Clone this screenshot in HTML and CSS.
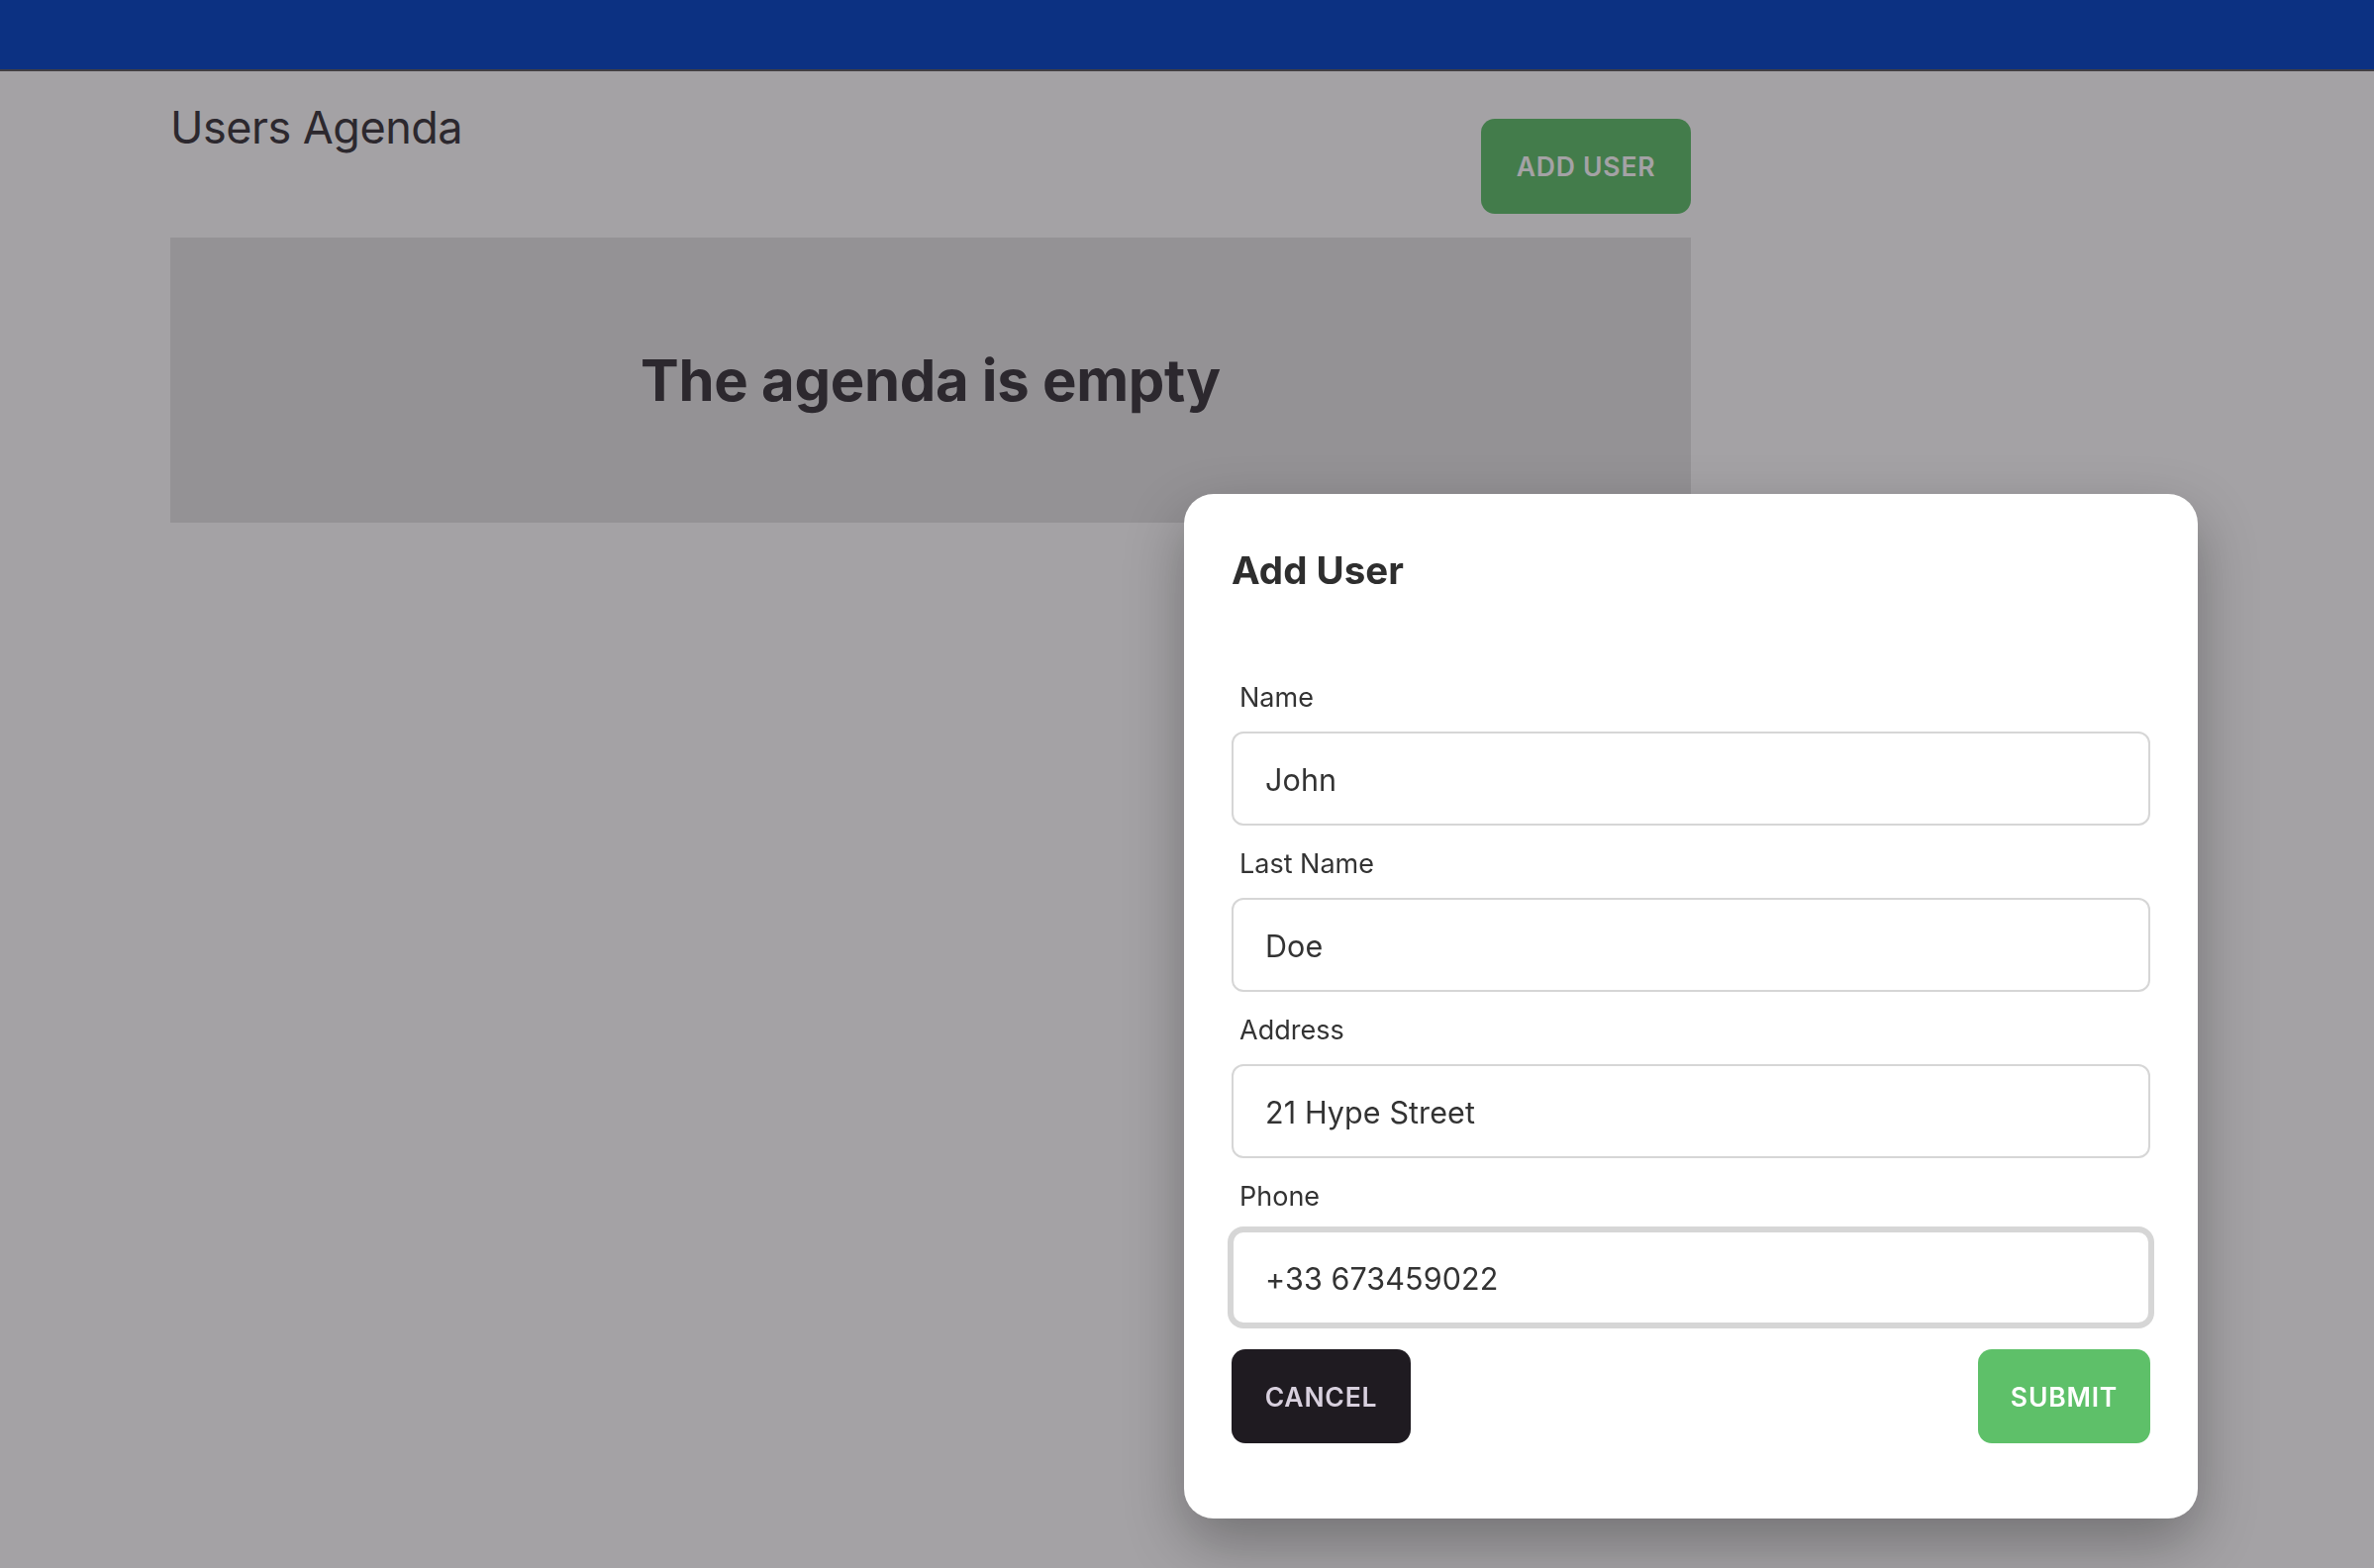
FILE: index.html
```html
<!DOCTYPE html>
<html lang="en">
<head>
<meta charset="utf-8">
<title>Users Agenda</title>
<link rel="stylesheet" href="styles.css">
</head>
<body>
<header class="topbar"></header>
<main class="page">
  <div class="page-head">
    <h1 class="page-title">Users Agenda</h1>
    <button class="btn btn-green btn-add">ADD USER</button>
  </div>
  <section class="empty-box">
    <h2 class="empty-text">The agenda is empty</h2>
  </section>
</main>
<div class="overlay">
  <div class="modal">
    <h2 class="modal-title">Add User</h2>
    <form class="form">
      <div class="field">
        <label class="label">Name</label>
        <input class="input" type="text" value="John">
      </div>
      <div class="field">
        <label class="label">Last Name</label>
        <input class="input" type="text" value="Doe">
      </div>
      <div class="field">
        <label class="label">Address</label>
        <input class="input" type="text" value="21 Hype Street">
      </div>
      <div class="field">
        <label class="label">Phone</label>
        <input class="input input-focus" type="text" value="+33 673459022">
      </div>
      <div class="actions">
        <button type="button" class="btn btn-dark">CANCEL</button>
        <button type="button" class="btn btn-green">SUBMIT</button>
      </div>
    </form>
  </div>
</div>
</body>
</html>
```

FILE: styles.css
```css
* { box-sizing: border-box; }
html, body { margin: 0; padding: 0; }
body {
  font-family: Inter, "Noto Sans", "Liberation Sans", sans-serif;
  background: #ffffff;
  color: #38353a;
  min-height: 1584px;
}
.topbar {
  height: 72px;
  background: #0243c5;
  border-bottom: 2px solid #5a5a5c;
}
.page {
  width: 1708px;
  padding: 29px 0 0 172px;
}
.page-head {
  display: flex;
  justify-content: space-between;
  align-items: flex-start;
}
.page-title {
  margin: 0;
  font-size: 45px;
  line-height: 56px;
  font-weight: 400;
  letter-spacing: -0.5px;
  color: #38353a;
}
.btn {
  font-family: Inter, "Noto Sans", "Liberation Sans", sans-serif;
  border: none;
  border-radius: 14px;
  height: 95px;
  font-size: 26.5px;
  font-weight: 600;
  letter-spacing: 0.8px;
  cursor: pointer;
  padding: 0;
}
.btn-green { background: #5ec069; color: #ffffff; }
.btn-dark { background: #1f1b21; color: #d8d0de; }
.btn-add {
  margin-top: 19px;
  height: 96px;
  width: 212px;
}
.empty-box {
  margin-top: 24px;
  height: 288px;
  background: #e4e4e4;
  display: flex;
  align-items: center;
  justify-content: center;
}
.empty-text {
  margin: 0;
  font-size: 58px;
  font-weight: 700;
  letter-spacing: -0.3px;
  color: #38353a;
}
.overlay {
  position: fixed;
  inset: 0;
  background: rgba(27, 22, 30, 0.4);
}
.modal {
  position: absolute;
  left: 1196px;
  top: 499px;
  width: 1024px;
  background: #ffffff;
  border-radius: 30px;
  padding: 54px 48px 76px 48px;
  box-shadow: 0 24px 60px rgba(0, 0, 0, 0.3);
}
.modal-title {
  margin: 0;
  font-size: 38.5px;
  line-height: 46px;
  font-weight: 700;
  color: #2e2e2e;
}
.form {
  margin-top: 86px;
  display: flex;
  flex-direction: column;
}
.field {
  display: flex;
  flex-direction: column;
  margin-bottom: 19px;
}
.field:nth-last-child(2) { margin-bottom: 25px; }
.label {
  margin-left: 8px;
  font-size: 27px;
  line-height: 40px;
  color: #333333;
  margin-bottom: 14px;
}
.input {
  font-family: Inter, "Noto Sans", "Liberation Sans", sans-serif;
  height: 95px;
  width: 100%;
  border: 2px solid #d6d6d6;
  border-radius: 12px;
  padding: 2px 32px 0 32px;
  font-size: 30.5px;
  letter-spacing: 0.1px;
  color: #333333;
  background: #ffffff;
  outline: none;
}
.input-focus {
  box-shadow: 0 0 0 4px #d6d6d6;
}
.actions {
  display: flex;
  justify-content: space-between;
}
.actions .btn-dark { width: 181px; }
.actions .btn-green { width: 174px; }
```
